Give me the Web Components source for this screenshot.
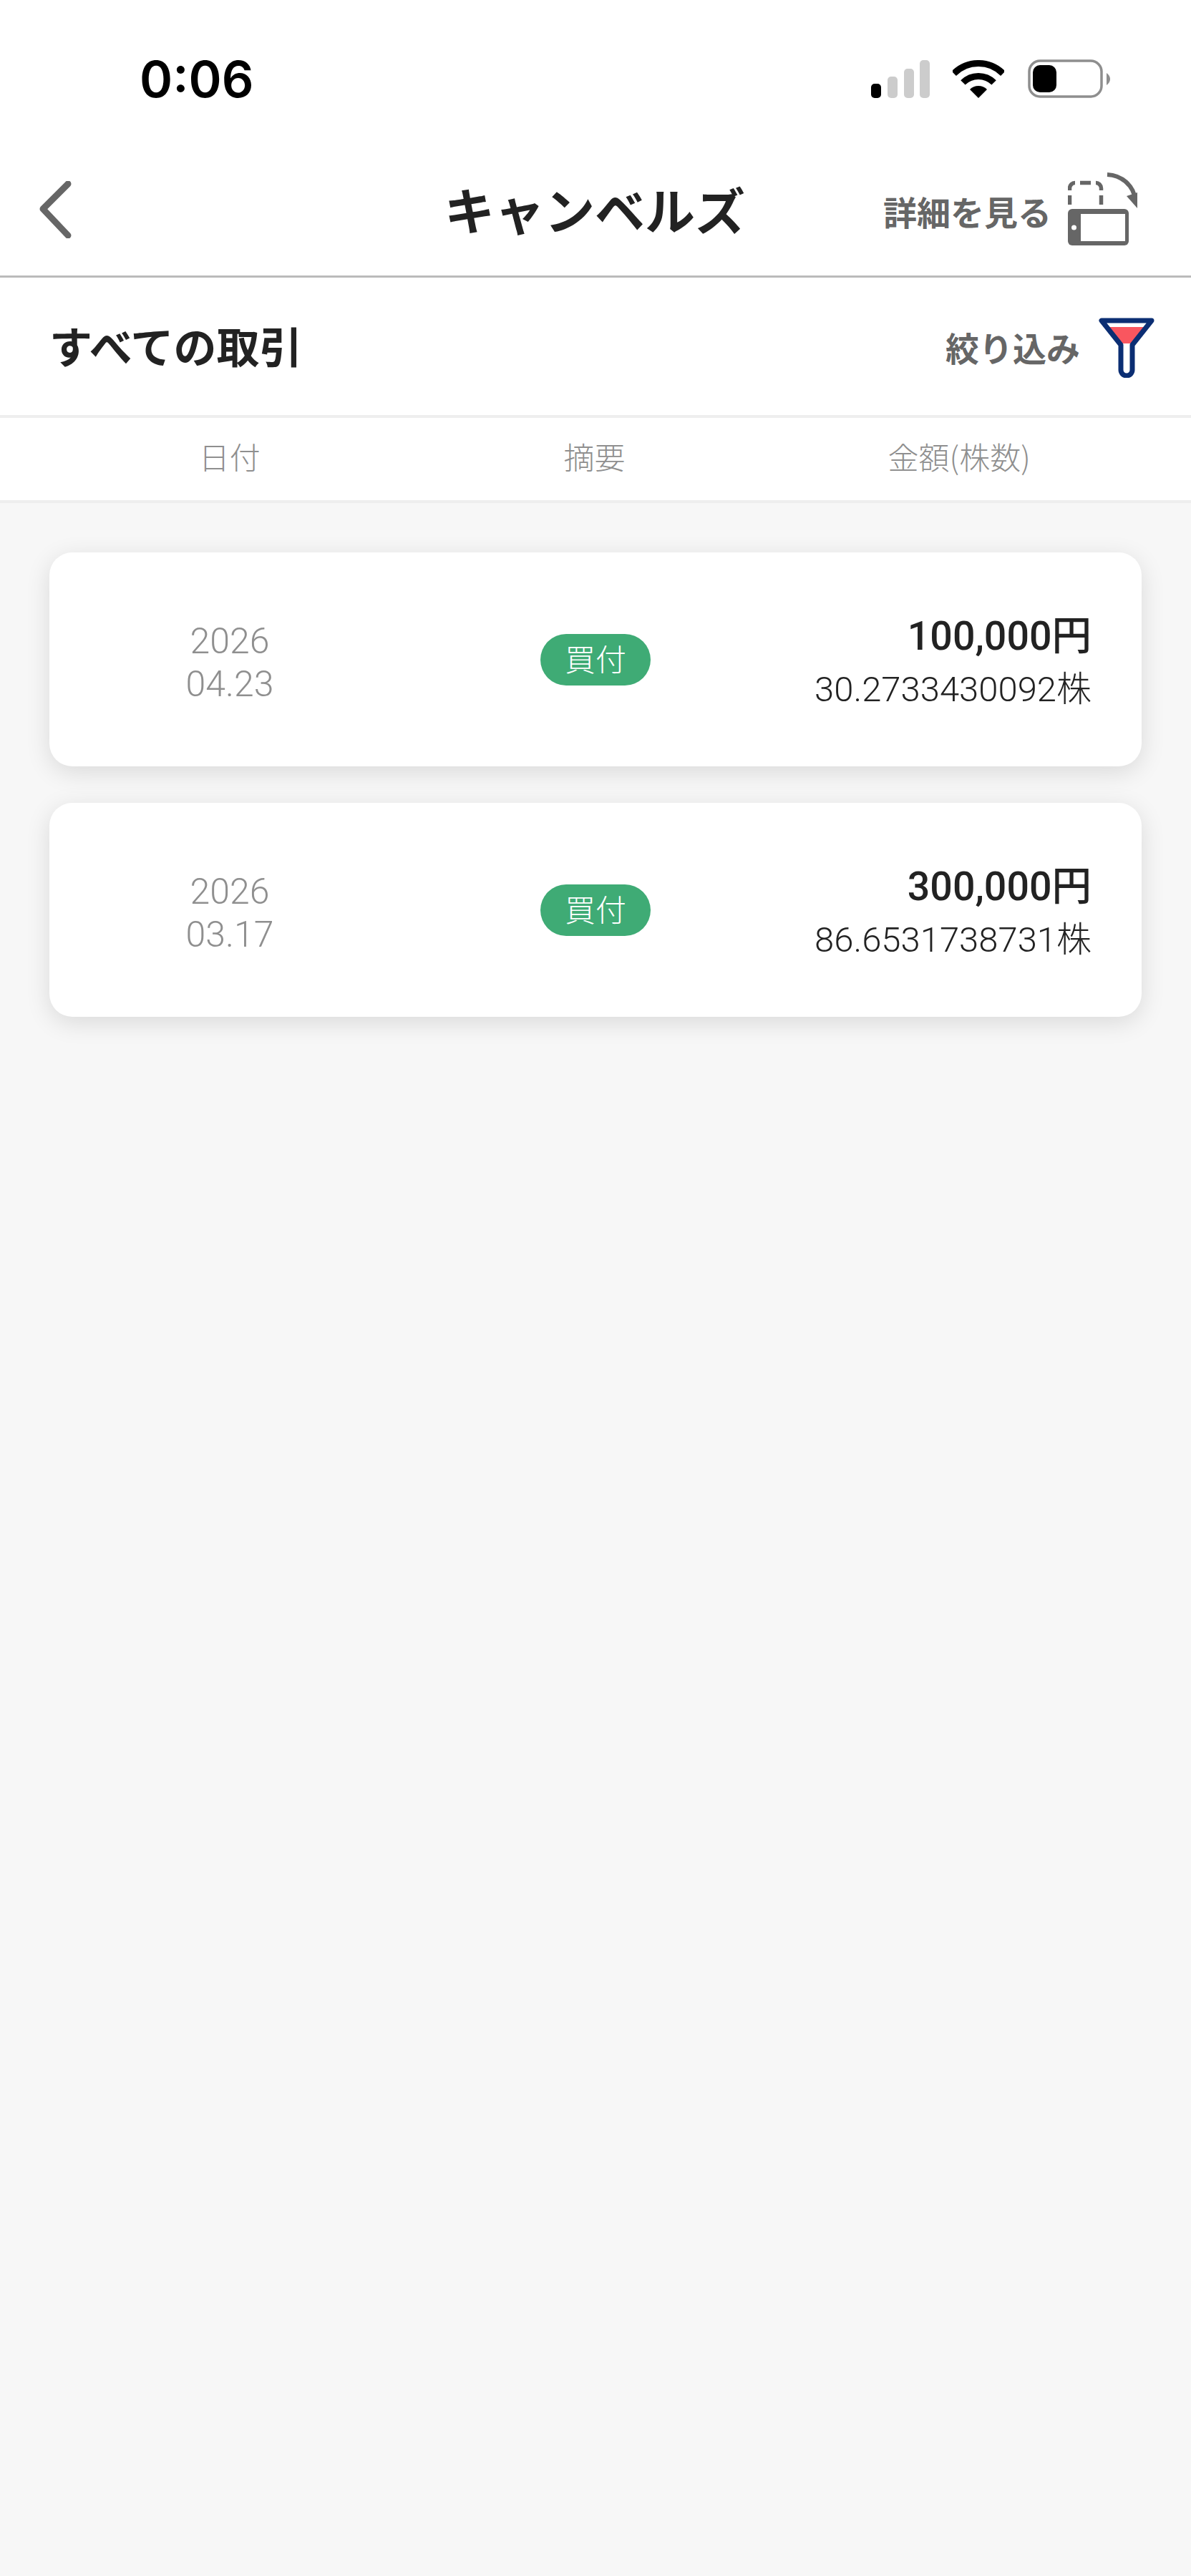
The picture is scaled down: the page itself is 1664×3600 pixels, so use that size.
<!DOCTYPE html>
<html lang="ja"><head><meta charset="utf-8"><title>キャンベルズ</title>
<style>
html,body{margin:0;padding:0;background:#f7f7f7}
body{font-family:"Liberation Sans","Noto Sans CJK JP",sans-serif}
</style></head><body>
<app-screen>
  <status-bar slot="top" time="0:06"></status-bar>
  <nav-bar slot="top" heading="キャンベルズ" action="詳細を見る"></nav-bar>
  <filter-bar slot="top" heading="すべての取引" action="絞り込み"></filter-bar>
  <table-head slot="top"><span>日付</span><span>摘要</span><span>金額(株数)</span></table-head>
  <trade-card year="2026" day="04.23" kind="買付" amount="100,000円" shares="30.2733430092株"></trade-card>
  <trade-card year="2026" day="03.17" kind="買付" amount="300,000円" shares="86.6531738731株"></trade-card>
</app-screen>
<script>
const CJK='"Noto Sans CJK JP","Liberation Sans",sans-serif';
const NUM='Roboto,"Noto Sans CJK JP",sans-serif';
function def(name,render){
  customElements.define(name,class extends HTMLElement{
    constructor(){super();this.attachShadow({mode:'open'})}
    connectedCallback(){this.shadowRoot.innerHTML=render(this)}
  });
}
def('app-screen',()=>`<style>
:host{display:block;width:1664px;height:3600px;background:#f7f7f7;overflow:hidden}
.top{display:block;background:#fff}
.list{display:flex;flex-direction:column;gap:51px;padding:69px 69px 0}
</style><div class="top"><slot name="top"></slot></div><div class="list"><slot></slot></div>`);

def('status-bar',el=>`<style>
:host{display:flex;height:200px;box-sizing:border-box;padding:84px 113px 0 195px;justify-content:space-between;align-items:flex-start;background:#fff}
.t{font:600 70px/54px Inter,sans-serif;color:#000}
.i{display:flex;align-items:flex-start;margin-top:-1px}
svg{display:block}
</style><div class="t">${el.getAttribute('time')}</div>
<div class="i">
<svg width="82" height="54" viewBox="0 0 82 54" style="margin-top:1px">
<rect x="0" y="33" width="14" height="20" rx="5" fill="#000"/>
<rect x="23" y="23" width="14" height="30" rx="5" fill="#ccc"/>
<rect x="46" y="12" width="14" height="41" rx="5" fill="#ccc"/>
<rect x="68" y="0" width="14" height="53" rx="5" fill="#ccc"/></svg>
<svg width="72" height="54" viewBox="0 0 72 54" style="margin-left:32px;margin-top:1px">
<path d="M1.7 18.7A48.5 48.5 0 0 1 70.3 18.7M14.4 31.4A30.5 30.5 0 0 1 57.6 31.4" fill="none" stroke="#000" stroke-width="9"/>
<path d="M36 53L24 41A17 17 0 0 1 48 41Z" fill="#000"/></svg>
<svg width="115" height="54" viewBox="0 0 115 54" style="margin-left:33px">
<rect x="2" y="2" width="101" height="50" rx="15" fill="#fff" stroke="#8e8e8e" stroke-width="3.500"/>
<rect x="7" y="8" width="33" height="38" rx="10" fill="#000"/>
<path d="M110 19C113 21 115 24 115 27.500C115 31 113 34 110 36Z" fill="#8e8e8e"/></svg>
</div>`);

def('nav-bar',el=>`<style>
:host{display:grid;grid-template-columns:1fr auto 1fr;align-items:center;height:188px;box-sizing:border-box;border-bottom:3px solid #bbb;background:#fff;font-family:${CJK}}
.b{padding-left:54px;display:flex}
h1{margin:0;font-size:70px;font-weight:700;color:#222;line-height:1;white-space:nowrap;position:relative;top:-1px;left:-1px}
.r{display:flex;justify-content:flex-end;align-items:center;padding-right:72px}
.a{font-size:47px;font-weight:700;color:#666;line-height:1;white-space:nowrap;margin:0 23px 0 0;position:relative;top:2px}
svg{display:block}
</style>
<div class="b"><svg width="46" height="80" viewBox="0 0 46 80"><path d="M41 4L6 39L41 76" fill="none" stroke="#666" stroke-width="9" stroke-linecap="round" stroke-linejoin="round"/></svg></div>
<h1>${el.getAttribute('heading')}</h1>
<div class="r"><span class="a">${el.getAttribute('action')}</span>
<svg width="100" height="104" viewBox="0 0 100 104">
<path d="M2.500 45V32M2.500 25V22A7.500 7.500 0 0 1 10 14.500M17 14.500H32M39 14.500A7.500 7.500 0 0 1 46.500 22V25M46.500 32V45" fill="none" stroke="#666" stroke-width="5.500"/>
<rect x="0" y="51" width="85" height="51" rx="6" fill="#666"/>
<rect x="18" y="58" width="62" height="38" fill="#fff"/>
<circle cx="8.500" cy="77" r="3.500" fill="#fff"/>
<path d="M55 3C75 4 92 18 94 38" fill="none" stroke="#666" stroke-width="6"/>
<path d="M82 33L97 50L97 28Z" fill="#666"/>
</svg></div>`);

def('filter-bar',el=>`<style>
:host{display:flex;justify-content:space-between;align-items:center;height:196px;box-sizing:border-box;border-bottom:4px solid #eee;padding:0 51px 0 69px;background:#fff;font-family:${CJK}}
.h{font-size:60px;font-weight:700;color:#222;line-height:1;position:relative;top:-2px}
.r{display:flex;align-items:center}
.a{font-size:47px;font-weight:700;color:#666;line-height:1;margin-right:26px}
svg{display:block;position:relative;top:2px}
</style><div class="h">${el.getAttribute('heading')}</div>
<div class="r"><span class="a">${el.getAttribute('action')}</span>
<svg width="78" height="84" viewBox="0 0 78 84">
<path d="M11 13H67L49 36H29Z" fill="#f9565f"/>
<path d="M4 4H74L47 38V73A8 8 0 0 1 31 73V38Z" fill="none" stroke="#0b2e73" stroke-width="7" stroke-linejoin="round"/>
</svg></div>`);

def('table-head',()=>`<style>
:host{display:grid;grid-template-columns:repeat(3,1fr);justify-items:center;align-items:center;height:119px;box-sizing:border-box;border-bottom:4px solid #eee;padding:0 69px 8px 66px;background:#fff;color:#8f8f8f;font:300 43px/1 ${CJK}}
</style><slot></slot>`);

def('trade-card',el=>`<style>
:host{display:grid;grid-template-columns:504px 518px 1fr;align-items:center;height:299px;box-sizing:border-box;padding-right:70px;background:#fff;border-radius:32px;box-shadow:0 8px 34px rgba(0,0,0,.12)}
.d{text-align:center;color:#8f8f8f;font:300 50px/60px ${NUM};padding-top:8px}
.k{justify-self:center;width:154px;height:72px;border-radius:36px;background:#3fab75;color:#fff;font:300 43px/66px ${CJK};text-align:center}
.m{text-align:right;color:#222;padding-top:10px}
.am{font:500 55.500px/60px ${NUM};margin-bottom:14px}
.sh{font:300 49px/60px ${NUM}}
</style>
<div class="d"><div>${el.getAttribute('year')}</div><div>${el.getAttribute('day')}</div></div>
<div class="k">${el.getAttribute('kind')}</div>
<div class="m"><div class="am">${el.getAttribute('amount')}</div><div class="sh">${el.getAttribute('shares')}</div></div>`);
</script>
</body></html>
